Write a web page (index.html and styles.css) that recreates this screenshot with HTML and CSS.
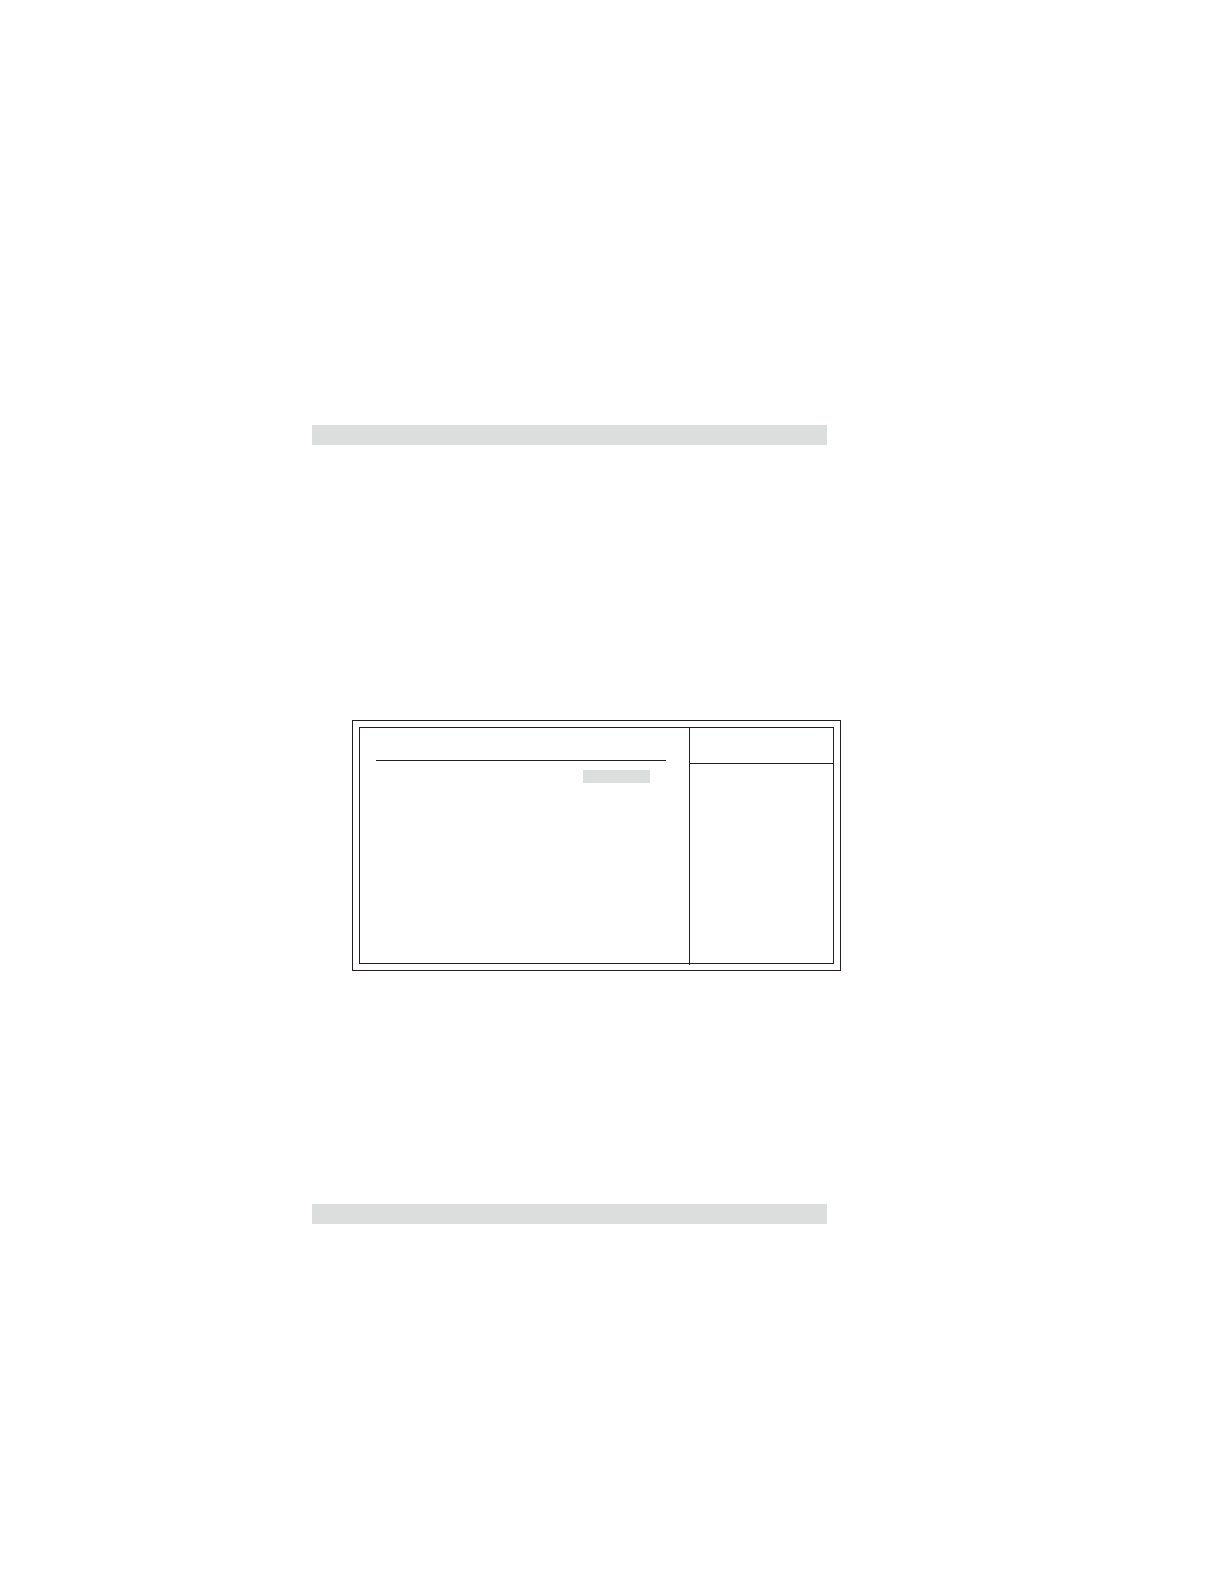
FILE: index.html
```html
<!DOCTYPE html>
<html lang="en">
<head>
<meta charset="utf-8">
<meta name="viewport" content="width=device-width, initial-scale=1">
<title>Setup screen</title>
<link rel="stylesheet" href="styles.css">
</head>
<body>
<main class="page">
  <div class="bar"></div>
  <section class="frame">
    <div class="screen">
      <div class="settings">
        <div class="settings-head"></div>
        <div class="selected"></div>
      </div>
      <aside class="help">
        <div class="help-head"></div>
      </aside>
    </div>
  </section>
  <div class="bar"></div>
</main>
</body>
</html>
```

FILE: styles.css
```css
* {
  box-sizing: border-box;
}

body {
  margin: 0;
  background: #fff;
  font-family: "Liberation Sans", sans-serif;
}

.page {
  --line: 1px solid #231f20;
  --fill: #dcdedd;
  display: grid;
  grid-template-columns: 312fr 515fr 397fr;
  padding: 425px 0 360px;
}

.bar,
.frame {
  grid-column: 2;
}

.bar {
  height: 20px;
  background: var(--fill);
}

/* double-ruled border round the setup screen */
.frame {
  margin: 275px -14px 233px 40px;
  padding: 6px;
  border: var(--line);
}

.screen {
  display: grid;
  grid-template-columns: 329fr 144fr;
  min-height: 237px;
  border: var(--line);
}

.settings {
  padding: 0 23px 0 16px;
}

.settings-head {
  height: 33px;
  border-bottom: var(--line);
}

.selected {
  width: 67px;
  height: 13px;
  margin: 9px 16px 0 auto;
  background: var(--fill);
}

/* the divider runs just past the inner border */
.help {
  margin-bottom: -2px;
  border-left: var(--line);
}

.help-head {
  height: 36px;
  border-bottom: var(--line);
}
```
